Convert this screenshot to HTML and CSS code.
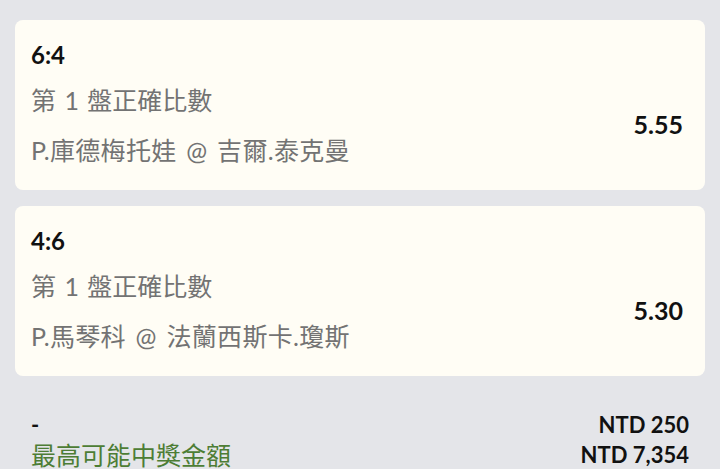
FILE: index.html
```html
<!DOCTYPE html>
<html lang="zh-Hant">
<head>
    <meta charset="UTF-8">
    <meta name="viewport" content="width=device-width, initial-scale=1.0">
    <title>投注單</title>
    <link rel="stylesheet" href="styles.css">
</head>
<body>
    <div class="slip">
        <div class="bet-card">
            <div class="bet-score">6:4</div>
            <div class="bet-market">第 1 盤正確比數</div>
            <div class="bet-match">P.庫德梅托娃 @ 吉爾.泰克曼</div>
            <div class="bet-odds">5.55</div>
        </div>

        <div class="bet-card">
            <div class="bet-score">4:6</div>
            <div class="bet-market">第 1 盤正確比數</div>
            <div class="bet-match">P.馬琴科 @ 法蘭西斯卡.瓊斯</div>
            <div class="bet-odds">5.30</div>
        </div>

        <div class="summary">
            <div class="summary-row">
                <span class="stake-label">-</span>
                <span class="amount">NTD 250</span>
            </div>
            <div class="summary-row">
                <span class="payout-label">最高可能中獎金額</span>
                <span class="amount">NTD 7,354</span>
            </div>
        </div>
    </div>
</body>
</html>
```

FILE: styles.css
```css
* {
    box-sizing: border-box;
    margin: 0;
    padding: 0;
}

body {
    background-color: #e4e5e9;
    font-family: Lato, "Noto Sans CJK TC", sans-serif;
    color: #111;
}

.slip {
    padding: 20px 15px 0 15px;
}

.bet-card {
    background-color: #fffdf5;
    border-radius: 8px;
    padding: 20px 22px 25px 16px;
    margin-bottom: 16px;
    display: grid;
    grid-template-columns: 1fr auto;
}

.bet-score {
    grid-column: 1;
    grid-row: 1;
    font-size: 24px;
    font-weight: 700;
    line-height: 30px;
}

.bet-market {
    grid-column: 1;
    grid-row: 2;
    margin-top: 15px;
    font-size: 25px;
    line-height: 30px;
    word-spacing: 2px;
    color: #737373;
}

.bet-match {
    grid-column: 1;
    grid-row: 3;
    margin-top: 20px;
    font-size: 25px;
    line-height: 30px;
    word-spacing: 3px;
    letter-spacing: 0.3px;
    color: #737373;
}

.bet-odds {
    grid-column: 2;
    grid-row: 2 / 4;
    align-self: center;
    padding-top: 12px;
    font-size: 25px;
    font-weight: 700;
    line-height: 30px;
}

.summary {
    padding: 17px 16px 0 16px;
}

.summary-row {
    display: flex;
    justify-content: space-between;
    align-items: center;
    height: 30px;
}

.stake-label {
    font-size: 22px;
    font-weight: 700;
}

.payout-label {
    font-size: 25px;
    color: #4d7d35;
}

.amount {
    font-size: 22px;
    font-weight: 700;
}
```
